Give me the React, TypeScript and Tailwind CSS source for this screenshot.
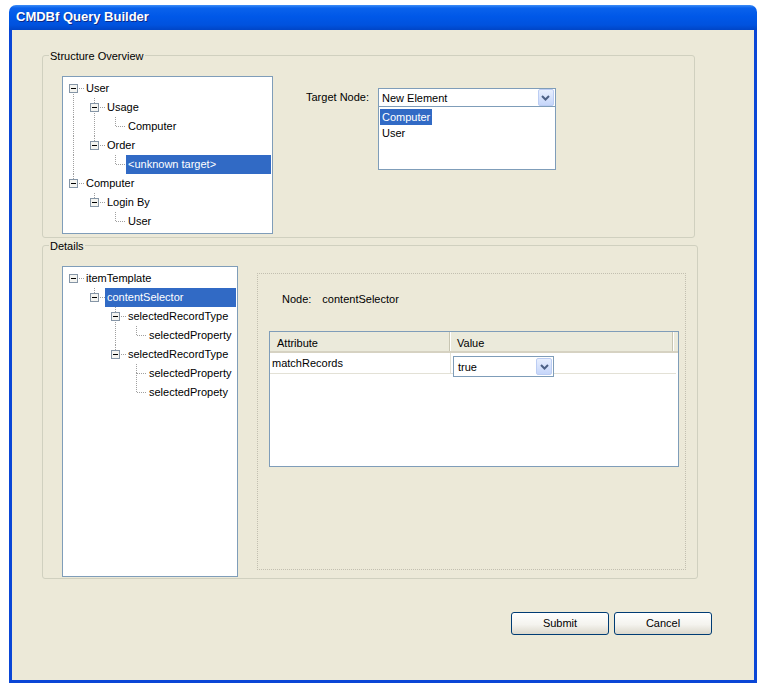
import type { ReactNode } from 'react';

type TreeNode = {
  label: string;
  selected?: boolean;
  children?: TreeNode[];
};

type TreeRow = {
  node: TreeNode;
  trail: boolean[];
  first: boolean;
  last: boolean;
};

const structureTree: TreeNode[] = [
  {
    label: 'User',
    children: [
      { label: 'Usage', children: [{ label: 'Computer' }] },
      { label: 'Order', children: [{ label: '<unknown target>', selected: true }] },
    ],
  },
  {
    label: 'Computer',
    children: [{ label: 'Login By', children: [{ label: 'User' }] }],
  },
];

const detailsTree: TreeNode[] = [
  {
    label: 'itemTemplate',
    children: [
      {
        label: 'contentSelector',
        selected: true,
        children: [
          { label: 'selectedRecordType', children: [{ label: 'selectedProperty' }] },
          {
            label: 'selectedRecordType',
            children: [{ label: 'selectedProperty' }, { label: 'selectedPropety' }],
          },
        ],
      },
    ],
  },
];

function flatten(nodes: TreeNode[], depth: number, trail: boolean[], out: TreeRow[]) {
  nodes.forEach((node, i) => {
    const last = i === nodes.length - 1;
    out.push({ node, trail, first: depth === 0 && i === 0, last });
    if (node.children) flatten(node.children, depth + 1, [...trail, !last], out);
  });
  return out;
}

const dot = { stroke: '#A0A0A0', strokeWidth: 1, strokeDasharray: '1 1' };

/** One 21px guide column of the tree: pass-through line, or the node's own connector */
function Guide({ pass, own, up, down, box }: { pass?: boolean; own?: boolean; up?: boolean; down?: boolean; box?: boolean }) {
  return (
    <svg width="21" height="19" className="shrink-0" shapeRendering="crispEdges">
      {pass && <line x1="10.5" y1="0" x2="10.5" y2="19" {...dot} />}
      {own && up && <line x1="10.5" y1="0" x2="10.5" y2="10" {...dot} />}
      {own && down && <line x1="10.5" y1="9" x2="10.5" y2="19" {...dot} />}
      {own && !box && <line x1="11" y1="9.5" x2="21" y2="9.5" {...dot} />}
      {own && box && (
        <>
          <line x1="16" y1="9.5" x2="21" y2="9.5" {...dot} />
          <rect x="6.5" y="5.5" width="8" height="8" fill="#F4F4F0" stroke="#8595A6" />
          <line x1="8" y1="9.5" x2="13" y2="9.5" stroke="#000" />
        </>
      )}
    </svg>
  );
}

function Tree({ nodes, className }: { nodes: TreeNode[]; className: string }) {
  const rows = flatten(nodes, 0, [], []);
  return (
    <div className={`shrink-0 border border-[#7F9DB9] bg-white pt-[2px] ${className}`}>
      {rows.map((row, i) => (
        <div key={i} className="flex h-[19px] items-center">
          {row.trail.map((pass, k) => (
            <Guide key={k} pass={pass} />
          ))}
          <Guide own up={!row.first} down={!row.last} box={!!row.node.children} />
          <span
            className={`mr-[1px] flex-1 whitespace-nowrap px-[2px] leading-[19px] ${
              row.node.selected ? 'bg-[#316AC5] text-white' : 'text-black'
            }`}
          >
            {row.node.label}
          </span>
        </div>
      ))}
    </div>
  );
}

function ComboArrow() {
  return (
    <div className="mr-[1px] flex h-[17px] w-[16px] shrink-0 items-center justify-center rounded-[2px] border border-[#BCCDF3] bg-[linear-gradient(to_bottom,#E8EFFE,#C6D6FA)]">
      <svg width="9" height="6" viewBox="0 0 9 6">
        <polyline points="1,1 4.5,4.5 8,1" fill="none" stroke="#4D6185" strokeWidth="2" />
      </svg>
    </div>
  );
}

function GroupBox({ title, className, children }: { title: string; className: string; children: ReactNode }) {
  return (
    <fieldset className={`rounded-[3px] border border-[#D0D0BF] ${className}`}>
      <legend className="ml-[6px] px-[1px] leading-[15px] text-black">
        <span className="relative top-[1px]">{title}</span>
      </legend>
      {children}
    </fieldset>
  );
}

function XpButton({ label }: { label: string }) {
  return (
    <button
      type="button"
      className="flex h-[23px] w-[98px] items-center justify-center rounded-[3px] border border-[#003C74] bg-[linear-gradient(to_bottom,#FFFFFF,#F4F3EE_55%,#DCD8CC)] text-[11px] text-black"
    >
      {label}
    </button>
  );
}

export default function App() {
  return (
    <div className="h-[692px] w-[768px] bg-white pl-[9px] pt-[5px] font-['Liberation_Sans',Arial,sans-serif] text-[11px]">
      <div className="flex h-[678px] w-[748px] flex-col">
        {/* Title bar */}
        <div className="flex h-[25px] shrink-0 items-center rounded-t-[7px] bg-[linear-gradient(to_bottom,#3D8DF7,#0A62EC_12%,#0058E8_45%,#0052DE_80%,#0045C6)] pb-[2px] pl-[7px]">
          <span className="text-[13px] font-bold text-white [text-shadow:1px_1px_0_#0B2A8A]">
            CMDBf Query Builder
          </span>
        </div>

        {/* Body */}
        <div className="flex flex-1 flex-col border-x-[3px] border-b-[3px] border-[#0A46D6] bg-[#ECE9D8]">
          <GroupBox title="Structure Overview" className="ml-[30px] mt-[18px] h-[190px] w-[653px]">
            <div className="flex items-start pl-[19px] pt-[13px]">
              <Tree nodes={structureTree} className="h-[158px] w-[211px]" />
              <div className="ml-[33px] mt-[12px] flex items-start">
                <span className="mr-[8px] leading-[19px] text-black">Target Node:</span>
                <div className="ml-[1px] w-[178px]">
                  <div className="flex h-[19px] items-center border border-[#7F9DB9] bg-white">
                    <span className="flex-1 pl-[3px] pt-[1px] text-black">New Element</span>
                    <ComboArrow />
                  </div>
                  <div className="h-[63px] border-x border-b border-[#7F9DB9] bg-white pl-[1px] pt-[2px]">
                    <div className="h-[16px]">
                      <span className="inline-block bg-[#316AC5] px-[2px] leading-[16px] text-white">Computer</span>
                    </div>
                    <div className="h-[16px] px-[2px] leading-[16px] text-black">User</div>
                  </div>
                </div>
              </div>
            </div>
          </GroupBox>

          <GroupBox title="Details" className="ml-[30px] h-[341px] w-[656px]">
            <div className="flex items-start pl-[19px] pt-[13px]">
              <Tree nodes={detailsTree} className="h-[311px] w-[176px]" />
              <div className="ml-[19px] mt-[7px] h-[297px] w-[429px] border border-dotted border-[#C2BFB0] pl-[24px] pt-[18px]">
                <div className="flex leading-[15px] text-black">
                  <span>Node:</span>
                  <span className="ml-[11px]">contentSelector</span>
                </div>
                <div className="-ml-[13px] mt-[24px] h-[136px] w-[410px] border border-[#7F9DB9] bg-white">
                  {/* Header */}
                  <div className="flex h-[21px] border-b-[2px] border-[#D6D2C2] bg-[#EBEADB] text-black">
                    <div className="flex w-[180px] items-center border-r border-[#C7C5B2] pl-[7px] pt-[3px]">
                      Attribute
                    </div>
                    <div className="flex w-[223px] items-center border-l border-r border-l-white border-r-[#C7C5B2] pl-[6px] pt-[3px]">
                      Value
                    </div>
                    <div className="flex-1 border-l border-white" />
                  </div>
                  {/* Row */}
                  <div className="flex h-[21px] w-[406px] border-b border-[#E3E1D6] text-black">
                    <div className="w-[181px] border-r border-[#E3E1D6] pl-[2px] leading-[20px]">matchRecords</div>
                    <div className="flex-1">
                      <div className="ml-[2px] mt-[3px] flex h-[21px] w-[101px] items-center border border-[#7F9DB9] bg-white">
                        <span className="flex-1 pl-[4px] pt-[1px]">true</span>
                        <ComboArrow />
                      </div>
                    </div>
                  </div>
                </div>
              </div>
            </div>
          </GroupBox>

          <div className="mt-[33px] flex justify-end gap-[5px] pr-[42px]">
            <XpButton label="Submit" />
            <XpButton label="Cancel" />
          </div>
        </div>
      </div>
    </div>
  );
}
